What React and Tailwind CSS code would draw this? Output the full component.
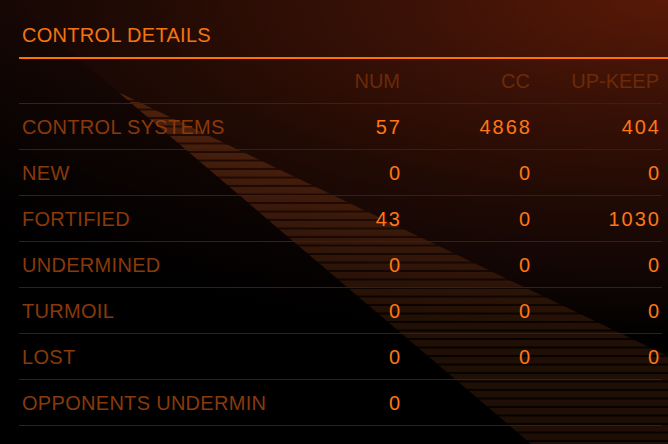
import React from 'react';

const rows = [
  { label: 'CONTROL SYSTEMS', num: '57', cc: '4868', upkeep: '404' },
  { label: 'NEW', num: '0', cc: '0', upkeep: '0' },
  { label: 'FORTIFIED', num: '43', cc: '0', upkeep: '1030' },
  { label: 'UNDERMINED', num: '0', cc: '0', upkeep: '0' },
  { label: 'TURMOIL', num: '0', cc: '0', upkeep: '0' },
  { label: 'LOST', num: '0', cc: '0', upkeep: '0' },
  { label: 'OPPONENTS UNDERMIN', num: '0' },
];

// diagonal striped band + shadow, purely decorative
const Backdrop = () => (
  <svg className="absolute inset-0 pointer-events-none" width="668" height="444" viewBox="0 0 668 444">
    <defs>
      <pattern id="stripes" width="668" height="8.5" patternUnits="userSpaceOnUse">
        <rect x="0" y="0" width="668" height="6.5" fill="#ff7a30" />
      </pattern>
      <linearGradient id="fade" x1="0" y1="92" x2="0" y2="444" gradientUnits="userSpaceOnUse">
        <stop offset="0" stopColor="#fff" stopOpacity="0.2" />
        <stop offset="0.5" stopColor="#fff" stopOpacity="0.12" />
        <stop offset="1" stopColor="#fff" stopOpacity="0.1" />
      </linearGradient>
      <linearGradient id="shade" x1="0" y1="0" x2="0" y2="200" gradientUnits="userSpaceOnUse">
        <stop offset="0" stopColor="#000" stopOpacity="0" />
        <stop offset="0.45" stopColor="#000" stopOpacity="0.3" />
        <stop offset="1" stopColor="#000" stopOpacity="0.5" />
      </linearGradient>
      <mask id="bandMask">
        <rect x="0" y="0" width="668" height="444" fill="url(#fade)" />
      </mask>
    </defs>
    <polygon points="0,-9 531,444 0,444" fill="url(#shade)" />
    <g mask="url(#bandMask)">
      <polygon points="118,92 668,356 668,444 531,444" fill="url(#stripes)" />
    </g>
    <polygon points="118,92 668,356 668,444 531,444" fill="#ff7a30" fillOpacity="0.025" />
  </svg>
);

const Num = ({ children }) => (
  <span className="tracking-[2px] mr-[-2px] text-[#ff7614]">{children}</span>
);

export default function App() {
  return (
    <div
      className="relative w-[668px] h-[444px] overflow-hidden bg-[radial-gradient(ellipse_900px_340px_at_100%_0%,#581906_0%,#3a1106_30%,#200a04_60%,#120604_80%,#000_100%)]"
      style={{ fontFamily: '"Liberation Sans", Arial, sans-serif' }}
    >
      <Backdrop />
      <div className="relative z-10 pt-[23px] pl-[19px]">
        <div className="pl-[3px] text-[20px] leading-[24px] tracking-[0.3px] text-[#f47412]">
          CONTROL DETAILS
        </div>
        <div className="mt-[10px] h-[2px] bg-[#ff7200]" />

        <div className="mr-[6px] text-[20px] leading-[24px]">
          <div className="flex h-[45px] items-center border-b border-[#4a1c07] pr-[3px] text-[#6c2a08]">
            <div className="flex-1" />
            <div className="w-[130px] text-right">NUM</div>
            <div className="w-[130px] text-right">CC</div>
            <div className="w-[129px] text-right">UP-KEEP</div>
          </div>
          {rows.map((r) => (
            <div
              key={r.label}
              className="flex h-[46px] items-center border-b border-[#461a06] pr-[3px]"
            >
              <div className="flex-1 pl-[3px] tracking-[0.3px] text-[#8a390a]">{r.label}</div>
              <div className="w-[130px] text-right">{r.num && <Num>{r.num}</Num>}</div>
              <div className="w-[130px] text-right">{r.cc && <Num>{r.cc}</Num>}</div>
              <div className="w-[129px] text-right">{r.upkeep && <Num>{r.upkeep}</Num>}</div>
            </div>
          ))}
        </div>
      </div>
    </div>
  );
}
